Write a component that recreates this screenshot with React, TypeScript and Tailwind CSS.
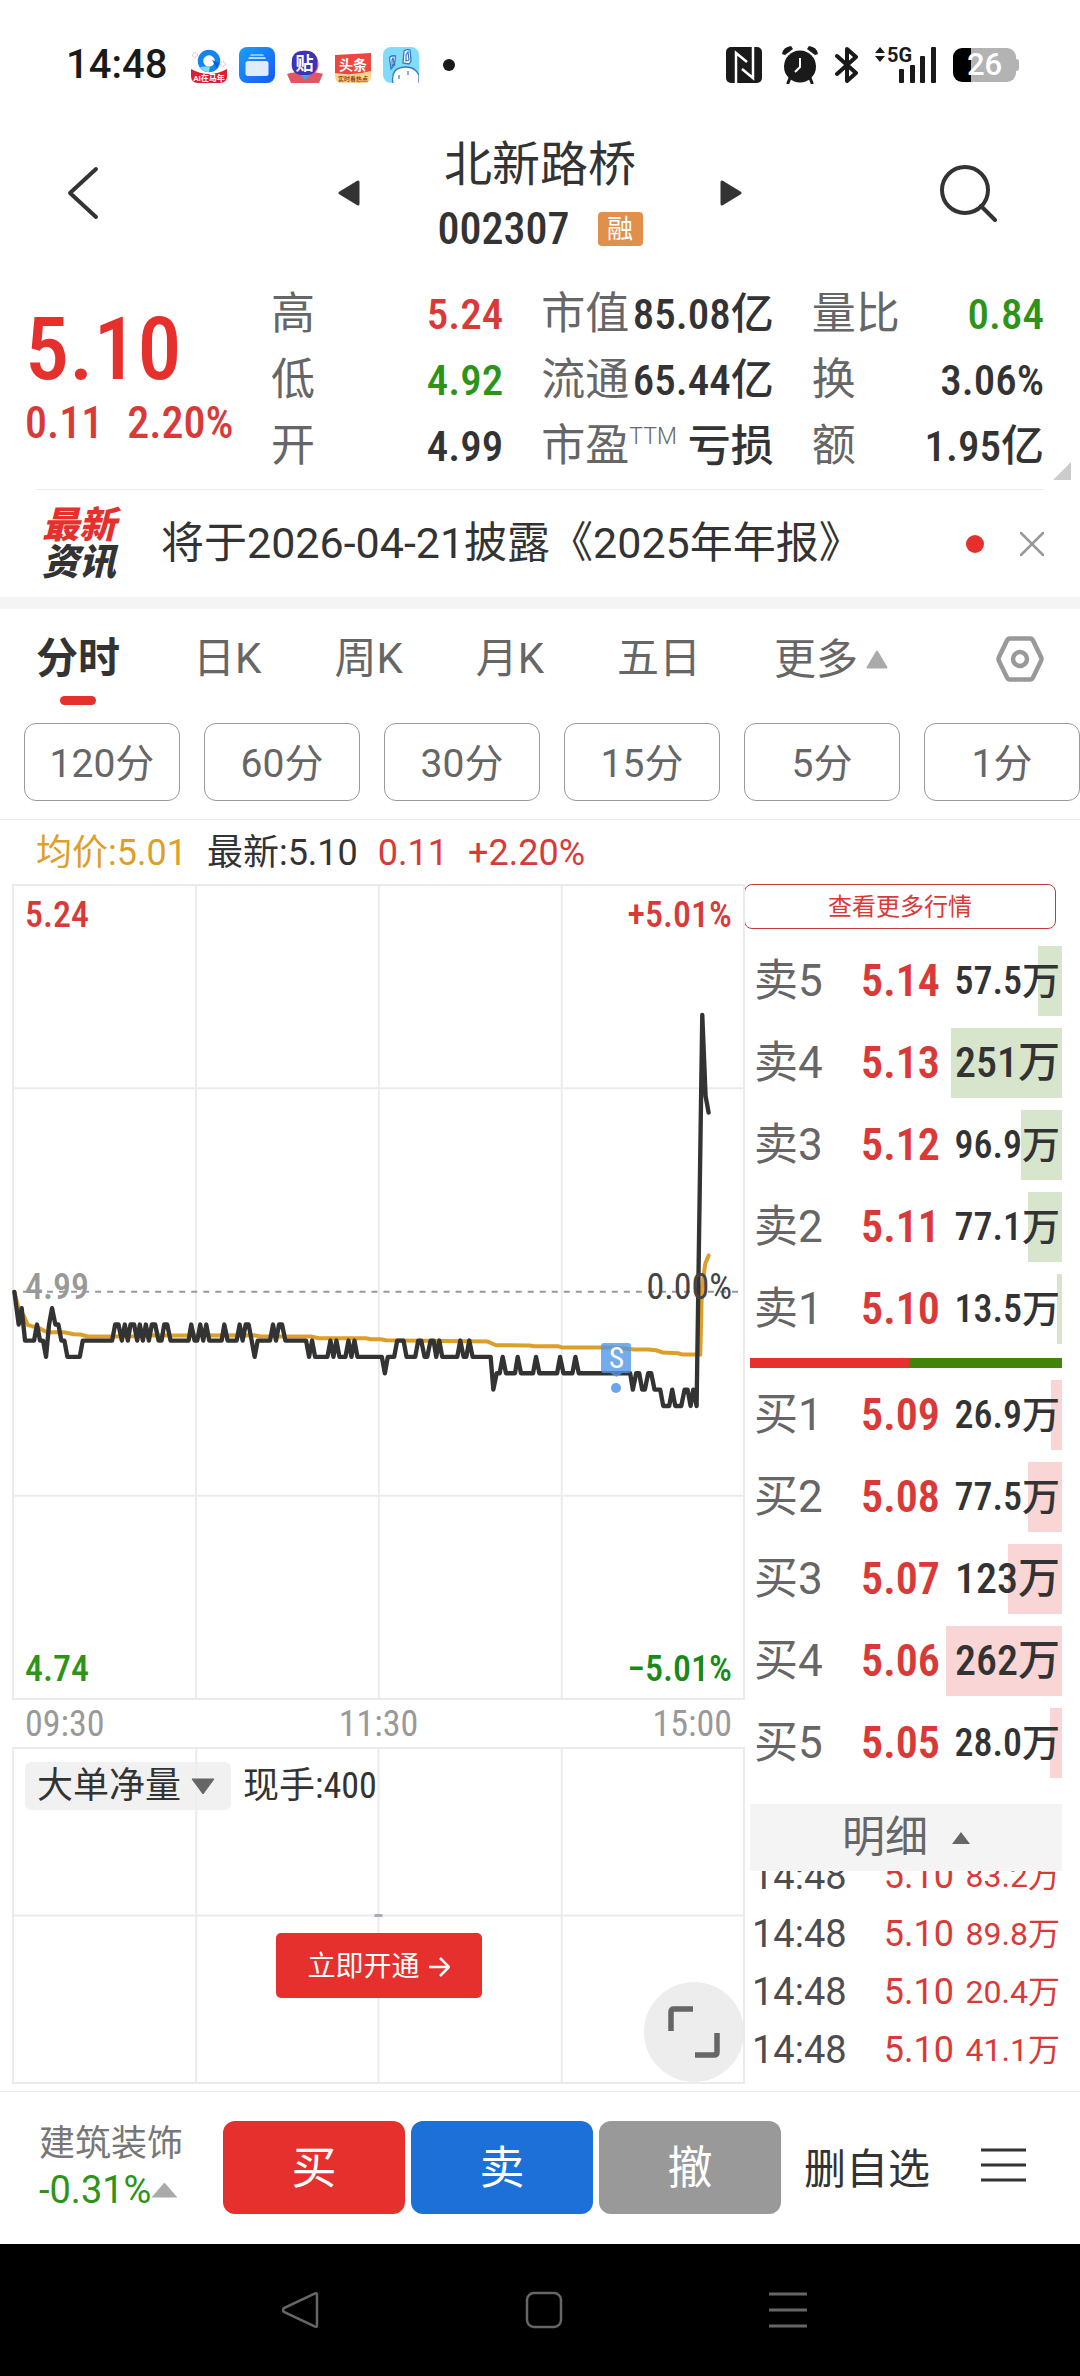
import { useState } from "react";
import type { ReactNode } from "react";

const NUM = "font-['Roboto_Condensed','Liberation_Sans_Narrow',Roboto,'Noto_Sans_CJK_SC',sans-serif]";

type Nivel = { label: string; price: string; volume: string; size: number };

// size = bar width in percent of the volume cell
const SELLS: Nivel[] = [
  { label: "卖5", price: "5.14", volume: "57.5万", size: 20 },
  { label: "卖4", price: "5.13", volume: "251万", size: 91 },
  { label: "卖3", price: "5.12", volume: "96.9万", size: 34 },
  { label: "卖2", price: "5.11", volume: "77.1万", size: 28 },
  { label: "卖1", price: "5.10", volume: "13.5万", size: 4 },
];

const BUYS: Nivel[] = [
  { label: "买1", price: "5.09", volume: "26.9万", size: 9 },
  { label: "买2", price: "5.08", volume: "77.5万", size: 28 },
  { label: "买3", price: "5.07", volume: "123万", size: 44 },
  { label: "买4", price: "5.06", volume: "262万", size: 95 },
  { label: "买5", price: "5.05", volume: "28.0万", size: 10 },
];

const TRADES = [
  { time: "14:48", price: "5.10", volume: "83.2万" },
  { time: "14:48", price: "5.10", volume: "89.8万" },
  { time: "14:48", price: "5.10", volume: "20.4万" },
  { time: "14:48", price: "5.10", volume: "41.1万" },
];

const TABS = ["分时", "日K", "周K", "月K", "五日"];
const MINUTES = ["120分", "60分", "30分", "15分", "5分", "1分"];

// [x, ticks from the previous close]
const PRICE: [number, number][] = [
  [4, 0], [17, -2], [26, -1], [36, -3], [63, -3], [72, -2], [81, -3], [90, -3], [99, -4], [108, -2],
  [117, -1], [127, -2], [136, -2], [145, -3], [154, -3], [163, -4], [200, -4], [209, -3], [297, -3],
  [306, -2], [316, -2], [326, -3], [335, -2], [344, -3], [352, -2], [363, -2], [372, -3], [380, -2],
  [389, -3], [398, -2], [407, -3], [416, -2], [426, -2], [436, -3], [445, -3], [453, -2], [462, -2],
  [472, -3], [526, -3], [534, -2], [544, -3], [552, -3], [561, -2], [570, -3], [579, -2], [588, -3],
  [625, -3], [633, -2], [643, -3], [670, -3], [679, -2], [688, -3], [697, -2], [706, -2], [715, -3],
  [724, -4], [733, -3], [770, -3], [779, -2], [788, -3], [797, -2], [806, -2], [816, -3], [878, -3],
  [887, -4], [896, -3], [905, -4], [942, -4], [951, -3], [960, -4], [969, -3], [978, -4], [996, -4],
  [1005, -3], [1014, -4], [1023, -3], [1032, -4], [1105, -4], [1114, -5], [1123, -4], [1142, -4],
  [1151, -3], [1170, -3], [1179, -4], [1205, -4], [1214, -3], [1223, -3], [1233, -4], [1241, -4],
  [1251, -3], [1260, -3], [1268, -4], [1277, -3], [1286, -4], [1331, -4], [1340, -3], [1350, -4],
  [1358, -4], [1367, -3], [1377, -4], [1431, -4], [1439, -6], [1449, -5], [1458, -5], [1467, -4],
  [1477, -5], [1504, -5], [1512, -4], [1522, -5], [1558, -5], [1567, -4], [1577, -5], [1630, -5],
  [1639, -4], [1649, -5], [1676, -5], [1685, -4], [1695, -5], [1849, -5], [1857, -6], [1867, -5],
  [1876, -5], [1885, -6], [1893, -6], [1903, -5], [1912, -5], [1922, -6], [1939, -6], [1948, -7],
  [1966, -7], [1975, -6], [1984, -7], [2002, -7], [2012, -6], [2021, -6], [2030, -7], [2038, -6],
  [2048, -7], [2065, 17], [2075, 12], [2084, 11],
];

const AVERAGE =
  "4,1219 17,1270 32,1290 44,1318 57,1322 77,1327 92,1335 107,1341 127,1340 152,1340 182,1346 202,1347 224,1353 292,1353 362,1352 422,1349 482,1350 722,1349 742,1353 892,1353 917,1358 1057,1358 1072,1361 1102,1361 1117,1364 1162,1365 1422,1368 1447,1379 1547,1380 1562,1382 1632,1382 1647,1386 1792,1386 1862,1392 1902,1392 1927,1394 1947,1401 1992,1403 2007,1407 2059,1407 2064,1205 2074,1135 2084,1110";

const pricePoints = PRICE.map(([x, t]) => `${x},${Math.round(1219 - t * 48.8)}`).join(" ");

function StatusBar() {
  return (
    <div className="flex h-[130px] items-center pr-[64px] pl-[66px] text-[#1a1a1a]">
      <span className="text-[40px] font-medium">14:48</span>
      <div className="ml-6 flex items-center gap-3">
        <svg viewBox="0 0 36 36" className="size-9">
          <circle cx="18" cy="14" r="8.5" fill="none" stroke="#1485f0" strokeWidth="5.5" />
          <path d="M9 20a10 10 0 0 0 9 5l1-6z" fill="#7fdcf8" />
          <path d="m21 13 7 3-2 6z" fill="#0c5fe0" />
          <circle cx="4" cy="8" r="2.4" fill="none" stroke="#f3a0a8" strokeDasharray="1.5 1" />
          <circle cx="32" cy="17" r="2.4" fill="none" stroke="#f3a0a8" strokeDasharray="1.5 1" />
          <path d="M0 22q18 10 36 0v7q0 7-7 7H7q-7 0-7-7z" fill="#dc1f30" />
          <text x="18" y="34" fontSize="8" fontWeight="700" textAnchor="middle" fill="#fff">AI在马年</text>
        </svg>
        <svg viewBox="0 0 36 36" className="size-9">
          <defs>
            <linearGradient id="files" x1="0" y1="0" x2="1" y2="1">
              <stop offset="0" stopColor="#1aa0fb" />
              <stop offset="1" stopColor="#1558f5" />
            </linearGradient>
          </defs>
          <rect width="36" height="36" rx="8" fill="url(#files)" />
          <path d="M12 7h12l1 2H11z" fill="#8cc4fd" />
          <path d="M10 10h16l1 2H9z" fill="#b5d8fe" />
          <rect x="6.500" y="14" width="23" height="15" rx="2.500" fill="#dfecff" />
        </svg>
        <svg viewBox="0 0 36 36" className="size-9">
          <path d="M0 27q8-4 18 2 10-6 18-2l-4 9H4z" fill="#e05763" />
          <circle cx="18" cy="17" r="13.500" fill="#d94f87" />
          <path d="m13 27 5 6 6-6z" fill="#39a4f5" />
          <rect x="5" y="4" width="25" height="24" rx="9" fill="#3d33b4" />
          <text x="17.500" y="23" fontSize="18" fontWeight="700" textAnchor="middle" fill="#fff">贴</text>
        </svg>
        <svg viewBox="0 0 36 36" className="size-9">
          <path d="M0 22h36v7q0 7-7 7H7q-7 0-7-7z" fill="#fbd28e" />
          <path d="m0 8 36-2v18q-18 5-36 2z" fill="#ea4740" />
          <text x="18" y="23" fontSize="14" fontWeight="700" textAnchor="middle" fill="#fff">头条</text>
          <text x="18" y="34" fontSize="6" fontWeight="700" textAnchor="middle" fill="#8a4b1c">实时看热点</text>
        </svg>
        <svg viewBox="0 0 36 36" className="size-9">
          <rect width="36" height="36" rx="8" fill="#80dcf8" />
          <g fill="#fff" stroke="#3578c8" strokeWidth="1.300">
            <path d="M8 22 6.500 11q1-3 6-2l-1 9zM20 16l1-12q3-2 6-1l1 11-2 3z" />
            <path d="M10 37q-3-17 13-17 9 0 13 8v9z" />
          </g>
          <path d="m9 13 1-2 1 6-2 2zM23 8l2-3 1 8-3 1zM16 28v4M25 24v4" stroke="#3578c8" strokeWidth="1.200" fill="none" />
        </svg>
      </div>
      <span className="ml-6 size-3 rounded-full bg-[#1a1a1a]" />

      <div className="ml-auto flex items-center">
        <svg viewBox="0 0 36 36" className="size-9">
          <rect width="36" height="36" rx="5" fill="#1a1a1a" />
          <path d="M10 36V6l11 9M27 0v31l-11-9" fill="none" stroke="#fff" strokeWidth="2.500" />
        </svg>
        <svg viewBox="0 0 36 38" className="ml-5 h-[38px] w-9">
          <circle cx="18" cy="20.500" r="16" fill="#1a1a1a" />
          <path d="M0 8q1-7 9-8l2 3-8 6zM36 8q-1-7-9-8l-2 3 8 6z" fill="#1a1a1a" />
          <path d="m8 32-2 5M28 32l2 5" stroke="#1a1a1a" strokeWidth="3" strokeLinecap="round" />
          <path d="M18 12v9l-5 5" fill="none" stroke="#fff" strokeWidth="2" />
        </svg>
        <svg viewBox="0 0 24 38" className="ml-[17px] h-[38px] w-6">
          <path d="m2 10 19 17-9 8V3l9 8L2 28" fill="none" stroke="#1a1a1a" strokeWidth="4" strokeLinejoin="round" strokeLinecap="round" />
        </svg>
        <div className="relative ml-4 h-9 w-[62px]">
          <svg viewBox="0 0 62 36" className="size-full" fill="#1a1a1a">
            <path d="m0 6 5-6 5 6zM0 9h10l-5 6z" />
            <rect x="24" y="22" width="5" height="14" rx="1" />
            <rect x="35" y="18" width="5" height="18" rx="1" />
            <rect x="45" y="9" width="5" height="27" rx="1" />
            <rect x="56" y="0" width="5" height="36" rx="1" />
          </svg>
          <span className="absolute top-0 left-3 text-[20px] leading-[16px] font-bold">5G</span>
        </div>
        <div className="relative ml-4 flex h-[34px] w-[63px] items-center justify-center rounded-[9px] bg-[linear-gradient(90deg,#000_29%,#b3b3b3_29%)] text-[31px] font-medium text-white">
          26
          <span className="absolute top-[11px] -right-[3px] h-3 w-[3px] rounded-r-sm bg-[#b3b3b3]" />
        </div>
      </div>
    </div>
  );
}

function Header() {
  return (
    <header className="flex h-[130px] items-center px-[64px] pt-1 text-[#333]">
      <button aria-label="返回" className="mb-2 w-[76px]">
        <svg viewBox="0 0 36 54" className="h-[54px] w-9">
          <path d="M32 3 6 27l26 24" fill="none" stroke="currentColor" strokeWidth="4" strokeLinecap="round" strokeLinejoin="round" />
        </svg>
      </button>
      <div className="flex flex-1 items-center justify-center">
        <button aria-label="上一只" className="mb-2">
          <svg viewBox="0 0 22 26" className="h-[26px] w-[22px]">
            <path d="M20 2v22L2 13z" fill="currentColor" stroke="currentColor" strokeWidth="3" strokeLinejoin="round" />
          </svg>
        </button>
        <div className="w-[360px] text-center">
          <h1 className="text-[48px] leading-[64px]">北新路桥</h1>
          <div className="flex h-16 items-center justify-center gap-7">
            <span className={`text-[44px] font-medium ${NUM}`}>002307</span>
            <span className="flex h-[34px] w-[45px] items-center justify-center rounded-[4px] bg-[#e0904c] text-[26px] leading-none text-white">融</span>
          </div>
        </div>
        <button aria-label="下一只" className="mb-2">
          <svg viewBox="0 0 22 26" className="h-[26px] w-[22px]">
            <path d="M2 2v22l18-11z" fill="currentColor" stroke="currentColor" strokeWidth="3" strokeLinejoin="round" />
          </svg>
        </button>
      </div>
      <button aria-label="搜索" className="mb-2 w-[76px]">
        <svg viewBox="0 0 60 58" className="h-[58px] w-[60px]">
          <circle cx="25" cy="26" r="23" fill="none" stroke="currentColor" strokeWidth="4" />
          <path d="m41 42 14 14" stroke="currentColor" strokeWidth="4" strokeLinecap="round" />
        </svg>
      </button>
    </header>
  );
}

function Stat({ label, sup, value, color }: { label: string; sup?: string; value: ReactNode; color?: string }) {
  return (
    <div className="flex h-[66px] items-center justify-between whitespace-nowrap">
      <dt className="flex text-[44px] text-[#666]">
        {label}
        {sup && <span className="-mr-2 text-[23px] leading-[48px] font-light">{sup}</span>}
      </dt>
      <dd className={`text-[43px] font-medium ${NUM} ${color ?? "text-[#333]"}`}>{value}</dd>
    </div>
  );
}

function Quote() {
  return (
    <section className="relative flex pt-[21px] pb-[10px]">
      <div className={`w-[271px] pt-6 pl-[25px] text-[#e6302e] ${NUM}`}>
        <div className="text-[88px] leading-[88px] font-medium">5.10</div>
        <div className="flex gap-6 text-[44px] leading-[60px] font-medium text-[#d93a38]">
          <span>0.11</span>
          <span>2.20%</span>
        </div>
      </div>
      <dl className="grid flex-1 grid-cols-3 gap-x-[38px] pr-9">
        <Stat label="高" value="5.24" color="text-[#d93a38]" />
        <Stat label="市值" value="85.08亿" />
        <Stat label="量比" value="0.84" color="text-[#2c9418]" />
        <Stat label="低" value="4.92" color="text-[#2c9418]" />
        <Stat label="流通" value="65.44亿" />
        <Stat label="换" value="3.06%" />
        <Stat label="开" value="4.99" />
        <Stat label="市盈" sup="TTM" value="亏损" />
        <Stat label="额" value="1.95亿" />
      </dl>
      <span className="absolute right-[9px] bottom-[9px] size-[18px] bg-[#ccc] [clip-path:polygon(100%_0,100%_100%,0_100%)]" />
    </section>
  );
}

function News({ onClose }: { onClose: () => void }) {
  return (
    <section className="border-b-[12px] border-[#f4f4f4]">
      <div className="mx-9 flex h-[108px] items-center border-t border-[#ebebeb]">
        <div className="w-[125px] pl-1.5 text-[37px] leading-[37px] font-black italic">
          <div className="text-[#e6302e]">最新</div>
          <div className="text-[#333]">资讯</div>
        </div>
        <a href="#news" className="flex-1 text-[43px] whitespace-nowrap text-[#333]">将于2026-04-21披露《2025年年报》</a>
        <span className="size-[18px] rounded-full bg-[#e6302e]" />
        <button aria-label="关闭" className="ml-9" onClick={onClose}>
          <svg viewBox="0 0 24 24" className="size-6">
            <path d="m1 1 22 22M23 1 1 23" stroke="#999" strokeWidth="2.500" strokeLinecap="round" />
          </svg>
        </button>
      </div>
    </section>
  );
}

function Tabs() {
  const [active, setActive] = useState("分时");
  return (
    <nav className="flex h-[114px] items-start gap-[73px] px-9 pt-[22px] text-[42px] text-[#666]">
      {TABS.map((t) => (
        <button key={t} onClick={() => setActive(t)} className="flex flex-col items-center gap-[9px] whitespace-nowrap">
          <span className={t === active ? "leading-[56px] font-bold text-[#333]" : "leading-[56px]"}>{t}</span>
          {t === active && <span className="h-[9px] w-9 rounded-full bg-[#e6302e]" />}
        </button>
      ))}
      <button className="flex h-14 items-center gap-2 whitespace-nowrap">
        更多
        <svg viewBox="0 0 22 19" className="h-[19px] w-[22px]">
          <path d="M11 1.500 20.500 17.500h-19z" fill="#aaa" stroke="#aaa" strokeWidth="2" strokeLinejoin="round" />
        </svg>
      </button>
      <button aria-label="设置" className="ml-auto flex h-14 items-center">
        <svg viewBox="0 0 48 46" className="h-[46px] w-12" fill="none" stroke="#999" strokeWidth="4.500">
          <path d="M14 2.500h20q2 0 3 2l8 16.500q1 2 0 4l-8 16.500q-1 2-3 2H14q-2 0-3-2L3 25q-1-2 0-4l8-16.500q1-2 3-2z" />
          <circle cx="24" cy="23" r="7" />
        </svg>
      </button>
    </nav>
  );
}

function Chart() {
  return (
    <div className={`relative h-[814px] text-[36px] leading-[36px] font-medium ${NUM}`}>
      <svg viewBox="0 0 2190 2439" preserveAspectRatio="none" className="size-full overflow-visible" fill="none">
        <path d="M0 0H2190V2439H0zM0 609H2190M0 1830H2190M548 0V2439M1096 0V2439M1644 0V2439" stroke="#ebebeb" strokeWidth="6" />
        <path d="M30 1219H2190" stroke="#999" strokeWidth="6" strokeDasharray="18 18" />
        <polyline points={AVERAGE} stroke="#dc9f2a" strokeWidth="12" strokeLinejoin="round" strokeLinecap="round" />
        <polyline points={pricePoints} stroke="#333" strokeWidth="13" strokeLinejoin="round" strokeLinecap="round" />
      </svg>
      <span className="absolute top-3 left-3 text-[#d93a38]">5.24</span>
      <span className="absolute top-3 right-3 text-[#d93a38]">+5.01%</span>
      <span className="absolute top-[384px] left-3 text-[#999]">4.99</span>
      <span className="absolute top-[384px] right-3 font-normal text-[#444]">0.00%</span>
      <span className="absolute bottom-3 left-3 text-[#2c9418]">4.74</span>
      <span className="absolute right-3 bottom-3 text-[#178a17]">−5.01%</span>
      {/* sell marker */}
      <div className="absolute top-[458px] left-[80.5%] flex flex-col items-center">
        <span className="flex size-[30px] items-center justify-center rounded-[3px] bg-[#4f97e8]/80 text-[29px] font-normal text-white">S</span>
        <span className="h-1 w-3 bg-[#4f97e8]/80 [clip-path:polygon(0_0,100%_0,50%_100%)]" />
        <span className="mt-[6px] size-[10px] rounded-full bg-[#68a5ea]" />
      </div>
    </div>
  );
}

function SubChart() {
  return (
    <div className="relative h-[335px]">
      <svg viewBox="0 0 730 335" preserveAspectRatio="none" className="size-full overflow-visible" fill="none">
        <path d="M0 0H730V335H0zM0 167.500H730M183 0V335M365 0V335M548 0V335" stroke="#ebebeb" strokeWidth="2" />
        <path d="M361 167.500h8" stroke="#aab" strokeWidth="3" />
      </svg>
      <div className="absolute top-[11px] left-3 flex items-center gap-3 text-[36px] text-[#333]">
        <button className="flex h-12 items-center gap-2.5 rounded-md bg-[#eee]/80 pr-4 pl-3">
          大单净量
          <svg viewBox="0 0 24 17" className="h-[17px] w-6">
            <path d="M1 1h22L12 16z" fill="#666" stroke="#666" strokeLinejoin="round" />
          </svg>
        </button>
        <span className={NUM}>现手:400</span>
      </div>
      <button className="absolute top-[185px] left-1/2 flex h-[65px] w-[206px] -translate-x-1/2 items-center justify-center gap-2 rounded-[5px] bg-[#e6302e] pt-0.5 text-[28px] whitespace-nowrap text-white">
        立即开通
        <svg viewBox="0 0 22 22" className="size-[22px]">
          <path d="M1 11h19M12 2l9 9-9 9" fill="none" stroke="#fff" strokeWidth="2.500" />
        </svg>
      </button>
      <button aria-label="全屏" className="absolute right-0 bottom-px flex size-[100px] items-center justify-center rounded-full bg-[#ebebeb]/90">
        <svg viewBox="0 0 52 52" className="size-[52px]">
          <path d="M3 25V6q0-3 3-3h19M49 27v19q0 3-3 3H27" fill="none" stroke="#666" strokeWidth="5.500" />
        </svg>
      </button>
    </div>
  );
}

function OrderBook({ rows, bar }: { rows: Nivel[]; bar: string }) {
  return (
    <table className="w-full table-fixed border-separate border-spacing-x-0 border-spacing-y-3">
      <tbody>
        {rows.map((r) => (
          <tr key={r.label} className="h-[70px]">
            <th scope="row" className="w-[90px] pl-1 text-left text-[44px] leading-none font-normal text-[#666]">{r.label}</th>
            <td className={`p-0 text-right text-[44px] leading-none font-semibold text-[#d93a38] ${NUM}`}>{r.price}</td>
            <td
              className={`relative w-[122px] py-0 pr-0.5 pl-0 text-right leading-none font-medium whitespace-nowrap text-[#333] ${NUM} ${
                r.volume.includes(".") ? "text-[38px]" : "text-[42px]"
              }`}
            >
              <span className={`absolute inset-y-0 right-0 ${bar}`} style={{ width: `${r.size}%` }} />
              <span className="relative">{r.volume}</span>
            </td>
          </tr>
        ))}
      </tbody>
    </table>
  );
}

function SidePanel() {
  return (
    <aside className="mr-[18px] w-[318px] shrink-0 pl-1.5">
      <button className="-ml-1.5 flex h-[45px] w-[312px] items-center justify-center rounded-lg border border-[#c23b3b] text-[24px] text-[#d93a38]">
        查看更多行情
      </button>
      <div className="pt-[5px]">
        <OrderBook rows={SELLS} bar="bg-[#d8e5cd]" />
      </div>
      <div className="mt-0.5 flex h-[10px]">
        <span className="w-[51%] bg-[#e6302e]" />
        <span className="flex-1 bg-[#42830c]" />
      </div>
      <OrderBook rows={BUYS} bar="bg-[#f9d5d5]" />
      <button className="mt-[14px] flex h-[67px] w-full items-center justify-center gap-6 bg-[#f4f4f4] text-[43px] text-[#666]">
        明细
        <svg viewBox="0 0 18 12" className="h-3 w-[18px]">
          <path d="M9 0l9 12H0z" fill="#666" />
        </svg>
      </button>
      {/* list scrolled to its end */}
      <div className="flex h-[208px] flex-col justify-end overflow-hidden">
        <table className="w-full shrink-0 table-fixed border-collapse">
          <tbody>
            {TRADES.map((t) => (
              <tr key={t.volume} className="h-[58px]">
                <td className="w-[102px] py-0 pr-0 pl-0.5 text-[38px] leading-none text-[#4d4d4d]">{t.time}</td>
                <td className="p-0 text-right text-[36px] leading-none text-[#d93a38]">{t.price}</td>
                <td className="w-[108px] py-0 pr-0.5 pl-0 text-right text-[32px] leading-none whitespace-nowrap text-[#d93a38]">{t.volume}</td>
              </tr>
            ))}
          </tbody>
        </table>
      </div>
    </aside>
  );
}

function BottomBar() {
  return (
    <footer className="flex h-[153px] items-center border-t border-[#e8e8e8] pr-[54px] pb-0.5 pl-[39px]">
      <button className="w-[184px] text-left text-[36px] leading-[46px] text-[#777]">
        <span className="block">建筑装饰</span>
        <span className="flex items-center text-[38px] text-[#2c9418]">
          -0.31%
          <span className="h-[15px] w-[26px] shrink-0 bg-[#aaa] [clip-path:polygon(50%_0,100%_100%,0_100%)]" />
        </span>
      </button>
      <div className="flex gap-1.5 text-[45px] text-white">
        <button className="h-[93px] w-[182px] rounded-xl bg-[#e6302e] pt-1">买</button>
        <button className="h-[93px] w-[182px] rounded-xl bg-[#1c70d8] pt-1">卖</button>
        <button className="h-[93px] w-[182px] rounded-xl bg-[#999] pt-1">撤</button>
      </div>
      <button className="ml-[23px] pt-1 text-[42px] whitespace-nowrap text-[#333]">删自选</button>
      <button aria-label="菜单" className="mb-1 ml-auto">
        <svg viewBox="0 0 45 34" className="h-[34px] w-[45px]">
          <path d="M0 2h45M0 17h45M0 32h45" stroke="#333" strokeWidth="3" />
        </svg>
      </button>
    </footer>
  );
}

function SystemNav() {
  return (
    <div className="flex h-[132px] items-center justify-center gap-[206px] bg-black pl-2">
      <button aria-label="后退">
        <svg viewBox="0 0 38 38" className="size-[38px]">
          <path d="M36 4v30q0 3-3 1L3 21q-2-2 0-4L33 3q3-2 3 1z" fill="none" stroke="#666" strokeWidth="2.500" />
        </svg>
      </button>
      <button aria-label="主页">
        <svg viewBox="0 0 38 38" className="size-[38px]">
          <rect x="2" y="2" width="34" height="34" rx="7" fill="none" stroke="#666" strokeWidth="2.500" />
        </svg>
      </button>
      <button aria-label="最近任务">
        <svg viewBox="0 0 38 38" className="size-[38px]">
          <path d="M0 3h38M0 19h38M0 35h38" stroke="#666" strokeWidth="3" />
        </svg>
      </button>
    </div>
  );
}

export default function App() {
  const [showNews, setShowNews] = useState(true);

  return (
    <div className="bg-white font-[Roboto,'Noto_Sans_CJK_SC',sans-serif]">
      <StatusBar />
      <Header />
      <Quote />
      {showNews && <News onClose={() => setShowNews(false)} />}
      <Tabs />
      <div className="flex gap-6 overflow-hidden pb-[18px] pl-6">
        {MINUTES.map((m) => (
          <button key={m} className="h-[78px] flex-1 rounded-xl border border-[#999] pt-1 text-[39px] text-[#666]">{m}</button>
        ))}
      </div>
      <div className="flex h-[65px] items-center gap-5 border-t border-[#e8e8e8] pt-0.5 pl-9 text-[36px] text-[#d93a38]">
        <span className="text-[#dc9f2a]">均价:5.01</span>
        <span className="text-[#333]">最新:5.10</span>
        <span>0.11</span>
        <span>+2.20%</span>
      </div>
      <div className="flex">
        <div className="ml-[13px] flex-1 pt-px">
          <Chart />
          <div className={`flex h-[49px] items-center justify-between px-3 text-[36px] text-[#999] ${NUM}`}>
            <span>09:30</span>
            <span>11:30</span>
            <span>15:00</span>
          </div>
          <SubChart />
        </div>
        <SidePanel />
      </div>
      <div className="h-2" />
      <BottomBar />
      <SystemNav />
    </div>
  );
}
